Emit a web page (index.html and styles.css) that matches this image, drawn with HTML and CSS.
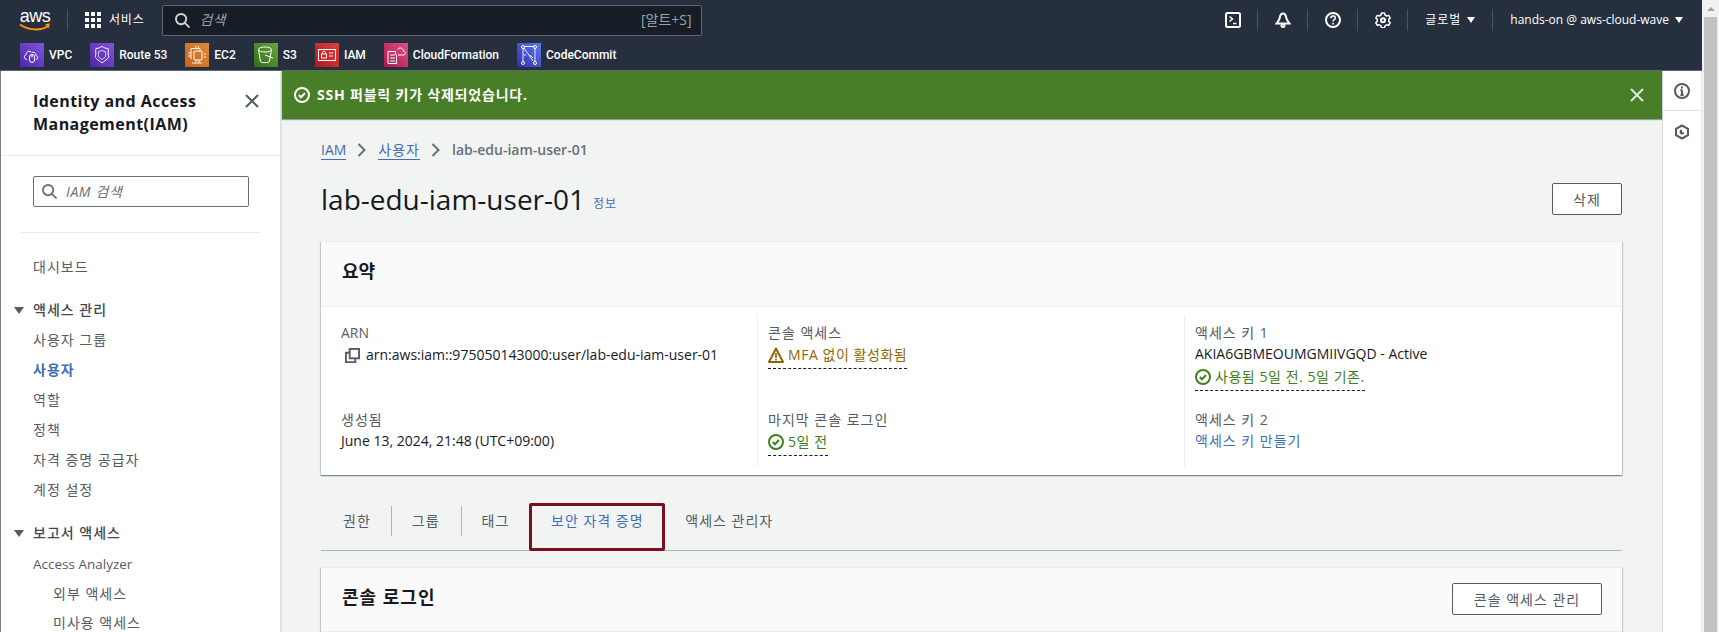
FILE: index.html
```html
<!DOCTYPE html>
<html lang="ko">
<head>
  <meta charset="UTF-8">
  <title>lab-edu-iam-user-01 | IAM</title>
  <link rel="stylesheet" href="styles.css">
</head>
<body>

<div class="app">
  <header class="console-nav">
    <div class="top-row">
      <div class="aws-logo">
        <span class="aws-word">aws</span>
        <svg width="32" height="9" viewBox="0 0 32 9"><path d="M1 1.500c8 6 21 6.500 28 1.500" fill="none" stroke="#f90" stroke-width="2"/><path d="M26 1l5-.5-1.500 5z" fill="#f90"/></svg>
      </div>
      <span class="nav-sep logo-sep"></span>
      <div class="services-btn">
        <svg class="grid-icon" width="16" height="16" viewBox="0 0 16 16" fill="#fff"><rect width="4" height="4"/><rect x="6" width="4" height="4"/><rect x="12" width="4" height="4"/><rect y="6" width="4" height="4"/><rect x="6" y="6" width="4" height="4"/><rect x="12" y="6" width="4" height="4"/><rect y="12" width="4" height="4"/><rect x="6" y="12" width="4" height="4"/><rect x="12" y="12" width="4" height="4"/></svg>
        <span>서비스</span>
      </div>
      <div class="global-search">
        <svg width="15" height="15" viewBox="0 0 16 16" fill="none" stroke="#d1d5db" stroke-width="2"><circle cx="6.500" cy="6.500" r="5.500"/><path d="M10.500 10.500l5 5"/></svg>
        <span class="search-hint">검색</span>
        <span class="search-key">[알트+S]</span>
      </div>
      <div class="top-right">
        <svg class="top-icon" width="16" height="16" viewBox="0 0 16 16" fill="none" stroke="#fff" stroke-width="2"><rect x="1" y="1" width="14" height="14" rx="1.500"/><path d="M4.500 4.500l3 2.500-3 2.500M8 11.500h3.500" stroke-width="1.500"/></svg>
        <span class="nav-sep"></span>
        <svg class="top-icon" width="16" height="16" viewBox="0 0 16 16" fill="none" stroke="#fff" stroke-width="2"><path d="M8 1.500c2.500 0 3 2.500 3.300 4.500.3 2 1.700 3.500 3.200 5.500h-13C3 9.500 4.400 8 4.700 6 5 4 5.500 1.500 8 1.500z"/><circle cx="8" cy="13.500" r="1.500"/></svg>
        <span class="nav-sep"></span>
        <svg class="top-icon" width="16" height="16" viewBox="0 0 16 16" fill="none" stroke="#fff" stroke-width="2"><circle cx="8" cy="8" r="7"/><path d="M5.800 6.200c0-3 4.500-3 4.500-.2 0 1.700-2.300 1.700-2.300 3.500" stroke-width="1.600"/><rect x="7.200" y="10.800" width="1.600" height="1.700" fill="#fff" stroke="none"/></svg>
        <span class="nav-sep"></span>
        <svg class="top-icon" width="16" height="16" viewBox="0 0 16 16" fill="none" stroke="#fff" stroke-width="2"><path d="M6.500 1h3l.5 2 1.700 1 2-.6 1.500 2.600-1.500 1.400v2l1.500 1.400-1.500 2.600-2-.6-1.700 1-.5 2h-3l-.5-2-1.700-1-2 .6L.8 10.800l1.500-1.400v-2L.8 6l1.500-2.600 2 .6L6 3z" stroke-width="1.500" stroke-linejoin="round"/><circle cx="8" cy="8.300" r="2"/></svg>
        <span class="nav-sep"></span>
        <span class="nav-menu region ko">글로벌<i class="caret"></i></span>
        <span class="nav-sep"></span>
        <span class="nav-menu account">hands-on @ aws-cloud-wave<i class="caret"></i></span>
      </div>
    </div>
    <div class="shortcut-row">
      <span class="shortcut">
        <svg class="svc-icon svc-vpc" viewBox="0 0 24 24"><path d="M7 16.500c-3 0-3.500-4-1-4.800 0-3.200 4-4.700 5.800-2.200 2.500-1 4.500 1 4 3 2.500.4 2.500 4 0 4" fill="none" stroke="#fff"/><rect x="9.500" y="11.500" width="5" height="8" rx="2.500" fill="none" stroke="#fff"/><path d="M12 11.500v3" stroke="#fff"/></svg>
        VPC
      </span>
      <span class="shortcut">
        <svg class="svc-icon svc-route" viewBox="0 0 24 24"><path d="M6 5.500c2.500 0 4-1 6-2 2 1 3.500 2 6 2 1 4-.5 4.500.5 7 1 3-2.500 4-6.500 7.500-4-3.500-7.500-4.500-6.500-7.500 1-2.500-.5-3 .5-7z" fill="none" stroke="#fff"/><path d="M8.500 8.500c2 0 2.500-1 3.500-1s1.500 1 3.500 1c.5 2-.2 2.500.2 4 .4 1.700-1.700 2.300-3.700 4-2-1.700-4.100-2.300-3.700-4 .4-1.500-.3-2 .2-4z" fill="none" stroke="#fff" stroke-width=".8"/></svg>
        Route 53
      </span>
      <span class="shortcut">
        <svg class="svc-icon svc-ec2" viewBox="0 0 24 24"><rect x="9" y="8" width="8" height="9" rx="1" fill="none" stroke="#fff"/><path d="M6 16V5.500h9V8M7 20h10M11 5.500V3M13.500 5.500V3M19 11h2M19 14h2M3 10h3M3 13h3M11 17v3M14 17v3" fill="none" stroke="#fff" stroke-width=".9"/></svg>
        EC2
      </span>
      <span class="shortcut">
        <svg class="svc-icon svc-s3" viewBox="0 0 24 24"><ellipse cx="11" cy="6.500" rx="6.500" ry="2.500" fill="none" stroke="#fff"/><path d="M4.500 6.500l2 12c.3 1.500 8.700 1.500 9 0l2-12M11 12l8 3" fill="none" stroke="#fff"/></svg>
        S3
      </span>
      <span class="shortcut">
        <svg class="svc-icon svc-iam" viewBox="0 0 24 24"><rect x="3.500" y="6.500" width="17" height="11" fill="none" stroke="#fff"/><rect x="6.500" y="11" width="5" height="4" fill="none" stroke="#fff" stroke-width=".9"/><path d="M7.500 11V9.500c0-1.800 3-1.800 3 0V11M14 10h4M14 13h4" fill="none" stroke="#fff" stroke-width=".9"/></svg>
        IAM
      </span>
      <span class="shortcut">
        <svg class="svc-icon svc-cf" viewBox="0 0 24 24"><path d="M14 12h6c2.200-1 1.500-4-.5-4-.5-3.500-4.500-4-6-1.500M4 8.500h7.500v3M4 8.500v12h8.500v-9M6 12h5M6 15h5M6 18h5" fill="none" stroke="#fff"/></svg>
        CloudFormation
      </span>
      <span class="shortcut">
        <svg class="svc-icon svc-cc" viewBox="0 0 24 24"><path d="M7 3.500h10M6 5v14M7 5l9 13M18 5v13M9 12h-2M13 12l3 3" fill="none" stroke="#fff" stroke-width=".9"/><circle cx="6" cy="4" r="1.500" fill="none" stroke="#fff"/><circle cx="6" cy="20" r="1.500" fill="none" stroke="#fff"/><circle cx="18" cy="4" r="1.500" fill="none" stroke="#fff"/><circle cx="18" cy="20" r="1.500" fill="none" stroke="#fff"/></svg>
        CodeCommit
      </span>
    </div>
  </header>

  <div class="workspace">
    <aside class="side-nav">
      <div class="side-head">
        <h2>Identity and Access Management(IAM)</h2>
        <svg class="side-close" width="16" height="16" viewBox="0 0 16 16" stroke="#545b64" stroke-width="2"><path d="M2 2l12 12M14 2L2 14"/></svg>
      </div>
      <div class="side-search">
        <svg width="15" height="15" viewBox="0 0 16 16" fill="none" stroke="#687078" stroke-width="2"><circle cx="6.500" cy="6.500" r="5.500"/><path d="M10.500 10.500l5 5"/></svg>
        <span>IAM 검색</span>
      </div>
      <hr class="side-rule">
      <ul class="side-list">
        <li>대시보드</li>
        <li class="side-section"><i class="side-caret"></i>액세스 관리</li>
        <li>사용자 그룹</li>
        <li class="active">사용자</li>
        <li>역할</li>
        <li>정책</li>
        <li>자격 증명 공급자</li>
        <li>계정 설정</li>
        <li class="side-section"><i class="side-caret"></i>보고서 액세스</li>
        <li class="side-first">Access Analyzer</li>
        <li class="side-sub">외부 액세스</li>
        <li class="side-sub">미사용 액세스</li>
      </ul>
    </aside>

    <main class="content">
      <div class="flash">
        <svg width="16" height="16" viewBox="0 0 16 16" fill="none" stroke="#fff" stroke-width="2"><circle cx="8" cy="8" r="7"/><path d="M4.800 8l2.200 2.200 4-4.200"/></svg>
        <span class="flash-text">SSH 퍼블릭 키가 삭제되었습니다.</span>
        <svg class="flash-close" width="14" height="14" viewBox="0 0 14 14" stroke="#dfe8d8" stroke-width="2"><path d="M1 1l12 12M13 1L1 13"/></svg>
      </div>

      <div class="page-body">
        <nav class="crumbs">
          <a>IAM</a>
          <svg width="10" height="14" viewBox="0 0 10 14" fill="none" stroke="#687078" stroke-width="2"><path d="M1.500 1l6 6-6 6"/></svg>
          <a class="ko">사용자</a>
          <svg width="10" height="14" viewBox="0 0 10 14" fill="none" stroke="#687078" stroke-width="2"><path d="M1.500 1l6 6-6 6"/></svg>
          <span>lab-edu-iam-user-01</span>
        </nav>

        <div class="title-row">
          <h1>lab-edu-iam-user-01</h1>
          <span class="info-link ko">정보</span>
          <button class="btn btn-delete ko">삭제</button>
        </div>

        <section class="card summary">
          <div class="card-head"><h3>요약</h3></div>
          <div class="summary-grid">
            <div class="summary-col">
              <div class="kv">
                <div class="kv-label">ARN</div>
                <div class="kv-value arn">
                  <svg width="15" height="15" viewBox="0 0 16 16" fill="none" stroke="#545b64" stroke-width="2"><rect x="5" y="1" width="10" height="10"/><path d="M5 5H1v10h10v-4"/></svg>
                  arn:aws:iam::975050143000:user/lab-edu-iam-user-01
                </div>
              </div>
              <div class="kv">
                <div class="kv-label ko">생성됨</div>
                <div class="kv-value">June 13, 2024, 21:48 (UTC+09:00)</div>
              </div>
            </div>
            <div class="summary-col">
              <div class="kv">
                <div class="kv-label ko">콘솔 액세스</div>
                <div class="kv-value"><span class="status warn">
                  <svg width="16" height="16" viewBox="0 0 16 16" fill="none" stroke="#8d6605" stroke-width="2"><path d="M8 1.500L15 15H1z" stroke-linejoin="round"/><path d="M8 6v5M8 12v1.500" stroke-width="1.700"/></svg>
                  MFA 없이 활성화됨</span></div>
              </div>
              <div class="kv">
                <div class="kv-label ko">마지막 콘솔 로그인</div>
                <div class="kv-value"><span class="status ok">
                  <svg width="16" height="16" viewBox="0 0 16 16" fill="none" stroke="#3f7f22" stroke-width="2"><circle cx="8" cy="8" r="7"/><path d="M4.800 8l2.200 2.200 4-4.200"/></svg>
                  5일 전</span></div>
              </div>
            </div>
            <div class="summary-col">
              <div class="kv">
                <div class="kv-label ko">액세스 키 1</div>
                <div class="kv-value">AKIA6GBMEOUMGMIIVGQD - Active</div>
                <div class="kv-value"><span class="status ok">
                  <svg width="16" height="16" viewBox="0 0 16 16" fill="none" stroke="#3f7f22" stroke-width="2"><circle cx="8" cy="8" r="7"/><path d="M4.800 8l2.200 2.200 4-4.200"/></svg>
                  사용됨 5일 전. 5일 기존.</span></div>
              </div>
              <div class="kv">
                <div class="kv-label ko">액세스 키 2</div>
                <div class="kv-value link ko">액세스 키 만들기</div>
              </div>
            </div>
          </div>
        </section>

        <div class="tabs ko">
          <span class="tab tab-line">권한</span>
          <span class="tab tab-line">그룹</span>
          <span class="tab">태그</span>
          <span class="tab tab-active">보안 자격 증명</span>
          <span class="tab">액세스 관리자</span>
        </div>

        <section class="card login-card">
          <div class="card-head login-head">
            <h3 class="ko">콘솔 로그인</h3>
            <button class="btn btn-console ko">콘솔 액세스 관리</button>
          </div>
        </section>
      </div>
    </main>

    <div class="tool-rail">
      <div class="rail-btn">
        <svg width="16" height="16" viewBox="0 0 16 16" fill="none" stroke="#545b64" stroke-width="2"><circle cx="8" cy="8" r="7"/><path d="M8 7v5M6.500 12h3M6.500 7H8"/><rect x="7" y="3.500" width="2" height="2" fill="#545b64" stroke="none"/></svg>
      </div>
      <div class="rail-btn">
        <svg width="16" height="16" viewBox="0 0 16 16" fill="none" stroke="#545b64" stroke-width="2"><path d="M8 1.500l6 3.300v6.400l-6 3.300-6-3.300V4.800z"/><path d="M8 5.500a2.500 2.500 0 1 0 2.400 3.200L8 8z" fill="#545b64" stroke="none"/></svg>
      </div>
    </div>
  </div>
</div>

<div class="scroll-track">
  <i class="scroll-arrow"></i>
  <div class="scroll-thumb"></div>
</div>

</body>
</html>
```

FILE: styles.css
```css
* {
  box-sizing: border-box;
}

html, body {
  margin: 0;
  height: 100%;
  overflow: hidden;
}

body {
  display: flex;
  font-family: "Open Sans", "Noto Sans CJK KR", sans-serif;
  font-size: 14px;
  line-height: 20px;
  color: #16191f;
  background: #f2f3f3;
}

/* hangul runs a bit tighter here than in the original, so space it out */
.ko {
  letter-spacing: 1px;
}

.app {
  flex: 1;
  min-width: 0;
  display: flex;
  flex-direction: column;
  border-left: 1px solid #7d7d7d;
}

/* top navigation */
.console-nav {
  height: 71px;
  flex: none;
  margin-left: -1px;
  background: #262f3e;
  border-bottom: 1px solid #5f6670;
  color: #fff;
}

.top-row {
  height: 40px;
  display: flex;
  align-items: center;
  padding-left: 18px;
}

.aws-logo {
  width: 34px;
  display: flex;
  flex-direction: column;
  align-items: center;
}

.aws-word {
  font-family: "Liberation Sans", sans-serif;
  font-size: 18px;
  line-height: 14px;
  letter-spacing: -.5px;
}

.nav-sep {
  width: 1px;
  height: 22px;
  background: #4a5361;
}

.logo-sep {
  margin-left: 15px;
}

.services-btn {
  display: flex;
  align-items: center;
  gap: 8px;
  margin-left: 17px;
  font-size: 12px;
  letter-spacing: .8px;
}

.global-search {
  width: 540px;
  height: 31px;
  margin-left: 17px;
  display: flex;
  align-items: center;
  padding: 0 9px 0 12px;
  background: #161d26;
  border: 1px solid #5f6670;
  border-radius: 2px;
  font-size: 14px;
}

.search-hint {
  margin-left: 10px;
  font-style: italic;
  color: #95a5a6;
}

.search-key {
  margin-left: auto;
  color: #95a5a6;
}

.top-right {
  display: flex;
  align-items: center;
  margin-left: auto;
  margin-right: 19px;
  font-size: 12px;
}

.top-icon {
  margin: 0 16.500px;
}

.nav-menu {
  display: flex;
  align-items: center;
  padding: 0 17px;
}

.nav-menu.account {
  padding-right: 0;
}

.caret {
  margin-left: 6px;
  border-left: 4px solid transparent;
  border-right: 4px solid transparent;
  border-top: 6px solid #fff;
}

.shortcut-row {
  display: flex;
  align-items: center;
  height: 30px;
  padding-left: 20px;
  gap: 18px;
}

.shortcut {
  display: flex;
  align-items: center;
  gap: 5px;
  font-family: Roboto, sans-serif;
  font-size: 12px;
  font-weight: 500;
}

.svc-icon {
  width: 24px;
  height: 24px;
}

.svc-vpc, .svc-route {
  background: linear-gradient(to top right, #4d27a8, #8152e0);
}

.svc-ec2 {
  background: linear-gradient(to top right, #c8611b, #e08c34);
}

.svc-s3 {
  background: linear-gradient(to top right, #2f6d1c, #6aa63f);
}

.svc-iam {
  background: linear-gradient(to top right, #b4161e, #d9423f);
}

.svc-cf {
  background: linear-gradient(to top right, #b0184f, #de5080);
}

.svc-cc {
  background: linear-gradient(to top right, #3330b0, #5a7ae8);
}

/* body */
.workspace {
  flex: 1;
  min-height: 0;
  display: flex;
}

.side-nav {
  width: 281px;
  flex: none;
  background: #fff;
  border-right: 2px solid #dfe2e2;
  color: #545b64;
}

.side-head {
  height: 85px;
  padding: 19px 20px 0 32px;
  display: flex;
  justify-content: space-between;
  border-bottom: 1px solid #eaeded;
}

.side-head h2 {
  margin: 0;
  width: 200px;
  font-size: 16px;
  line-height: 23px;
  font-weight: 700;
  letter-spacing: .45px;
  color: #16191f;
}

.side-close {
  margin-top: 3px;
}

.side-search {
  width: 216px;
  height: 31px;
  margin: 20px 0 0 32px;
  padding-left: 8px;
  display: flex;
  align-items: center;
  gap: 9px;
  border: 1px solid #687078;
  border-radius: 2px;
  color: #687078;
  font-style: italic;
  letter-spacing: .6px;
}

.side-rule {
  width: 240px;
  margin: 25px 0 0 20px;
  border: 0;
  border-top: 1px solid #eaeded;
}

.side-list {
  list-style: none;
  margin: 19px 0 0;
  padding: 0 0 0 32px;
  letter-spacing: 1px;
}

.side-list li {
  height: 30px;
  line-height: 30px;
  white-space: nowrap;
}

.side-list .side-section {
  position: relative;
  margin-top: 13px;
  font-weight: 500;
  color: #414750;
}

.side-caret {
  position: absolute;
  left: -19px;
  top: 12px;
  border-left: 5px solid transparent;
  border-right: 5px solid transparent;
  border-top: 7px solid #545b64;
}

.side-list .side-first {
  margin-top: 1px;
  letter-spacing: 0;
  font-size: 13.500px;
}

.side-list .active {
  font-weight: 700;
  color: #3f6fb3;
}

.side-list .side-sub {
  height: 29px;
  padding-left: 20px;
}

/* main column */
.content {
  flex: 1;
  min-width: 0;
  border-right: 1px solid #d5dbdb;
}

.flash {
  height: 48px;
  display: flex;
  align-items: center;
  padding: 0 18px 0 12px;
  background: #487e27;
  box-shadow: 0 1px 1px rgba(0,28,36,.4);
  color: #fff;
}

.flash-text {
  margin-left: 7px;
  font-weight: 700;
  letter-spacing: .8px;
}

.flash-close {
  margin-left: auto;
}

.page-body {
  padding: 0 40px 0 39px;
}

.crumbs {
  display: flex;
  align-items: center;
  height: 20px;
  margin-top: 21px;
  color: #687078;
  font-weight: 600;
  font-size: 14px;
}

.crumbs a {
  color: #3f6fb3;
  font-weight: 400;
  border-bottom: 1px solid #3f6fb3;
  line-height: 19px;
}

.crumbs svg {
  margin: 0 11px;
}

.title-row {
  display: flex;
  align-items: center;
  height: 32px;
  margin-top: 23px;
}

.title-row h1 {
  margin: 0;
  font-size: 28px;
  font-weight: 400;
  line-height: 32px;
}

.info-link {
  margin: 9px 0 0 8px;
  font-size: 12px;
  color: #3f6fb3;
}

.btn {
  height: 32px;
  padding: 0 20px;
  background: #fff;
  border: 1px solid #545b64;
  border-radius: 2px;
  font-family: inherit;
  font-size: 14px;
  color: #545b64;
}

.btn-delete {
  margin-left: auto;
  width: 70px;
}

.card {
  background: #fff;
  box-shadow: 0 1px 1px 0 rgba(0,28,36,.3), 1px 1px 1px 0 rgba(0,28,36,.15), -1px 1px 1px 0 rgba(0,28,36,.15);
  border-top: 1px solid #eaeded;
}

.summary {
  margin-top: 26px;
  height: 234px;
}

.card-head {
  height: 65px;
  padding: 18px 21px 0;
  background: #fafafa;
  border-bottom: 1px solid #eaeded;
}

.card-head h3 {
  margin: 0;
  font-size: 18px;
  line-height: 22px;
  font-weight: 700;
}

.summary-grid {
  display: grid;
  grid-template-columns: 436px 427px 1fr;
  padding-top: 8px;
}

.summary-col {
  height: 151px;
  padding: 8px 0 0 20px;
}

.summary-col + .summary-col {
  padding-left: 10px;
  border-left: 1px solid #eaeded;
}

.kv {
  height: 87px;
}

.kv-label {
  color: #545b64;
  margin-bottom: 1px;
}

.kv-value {
  height: 22px;
}

.arn {
  display: flex;
  align-items: center;
  gap: 6px;
  padding-left: 4px;
}

.link {
  color: #3f6fb3;
}

.status {
  display: inline-flex;
  align-items: center;
  gap: 4px;
  height: 25px;
  padding-bottom: 2px;
  border-bottom: 1px dashed #16191f;
  letter-spacing: .55px;
}

.warn {
  color: #8d6605;
}

.ok {
  color: #3f7f22;
}

.tabs {
  display: flex;
  align-items: center;
  height: 48px;
  margin-top: 28px;
  padding-left: 2px;
  border-bottom: 1px solid #aab7b8;
  color: #545b64;
}

.tab {
  height: 30px;
  line-height: 30px;
  padding: 0 20px;
  white-space: nowrap;
  margin-top: -11px;
}

.tab-line {
  border-right: 1px solid #aab7b8;
}

.tab-line + .tab-line {
  padding-right: 21px;
}

.tab-active {
  display: flex;
  align-items: center;
  justify-content: center;
  width: 136px;
  height: 48px;
  margin: 0 0 -1px 0;
  padding: 0 0 12px;
  color: #3f6fb3;
  border: 3px solid #7d0f22;
  border-radius: 2px;
}

.login-card {
  margin-top: 16px;
}

.login-head {
  display: flex;
  justify-content: space-between;
  height: 64px;
  padding: 15px 20px 0 21px;
}

.login-head h3 {
  margin-top: 3px;
}

.btn-console {
  width: 150px;
  padding: 0;
}

/* right tools */
.tool-rail {
  width: 39px;
  flex: none;
  background: #fff;
  border-right: 1px solid #eaeded;
}

.rail-btn {
  height: 40px;
  display: flex;
  align-items: center;
  justify-content: center;
  border-bottom: 1px solid #dfe2e2;
}

.rail-btn + .rail-btn {
  height: 42px;
  border: 0;
}

/* fake page scrollbar */
.scroll-track {
  width: 17px;
  flex: none;
  display: flex;
  flex-direction: column;
  align-items: center;
  background: #f1f1f1;
  padding-top: 7px;
}

.scroll-arrow {
  border-left: 4px solid transparent;
  border-right: 4px solid transparent;
  border-bottom: 4px solid #a3a3a3;
}

.scroll-thumb {
  flex: 1;
  width: 13px;
  margin-top: 6px;
  background: #c1c1c1;
}
```
